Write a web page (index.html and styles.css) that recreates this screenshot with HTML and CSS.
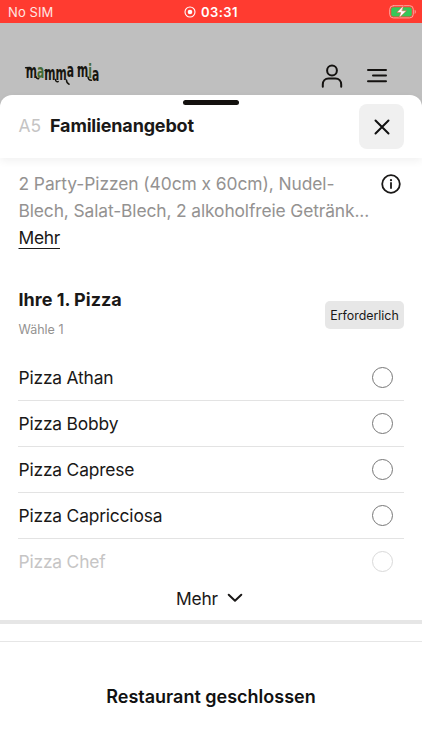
FILE: index.html
```html
<!DOCTYPE html>
<html lang="de">
<head>
<meta charset="utf-8">
<title>Familienangebot</title>
<link rel="stylesheet" href="styles.css">
</head>
<body>
<div class="screen">
  <div class="status">
    <span class="carrier">No SIM</span>
    <span class="clock">
      <svg width="12" height="12" viewBox="0 0 12 12"><circle cx="6" cy="6" r="5" fill="none" stroke="#fff" stroke-width="1.1"/><circle cx="6" cy="6" r="2.3" fill="#fff"/></svg>
      <span class="time">03:31</span>
    </span>
    <svg class="battery" width="28" height="14" viewBox="0 0 28 14">
      <rect x=".7" y=".7" width="23.6" height="12.2" rx="3.6" fill="none" stroke="#ffa69f" stroke-width="1"/>
      <rect x="2.2" y="2.2" width="20.6" height="9.2" rx="2" fill="#36c759"/>
      <path d="M25.7 4.7c1.5.7 1.5 3.5 0 4.2z" fill="#ffa69f"/>
      <path d="M14.5.6 7.8 7.6h4L10 13l7.5-7.2h-4.3z" fill="#fff" stroke="#ef4936" stroke-width=".5"/>
    </svg>
  </div>
  <header class="topbar">
    <svg class="logo" width="78" height="26" viewBox="0 0 78 26">
      <text class="logo-text" transform="scale(.75 1.18)" x="1" y="12.3">m<tspan class="green">a</tspan><tspan dy="2">m</tspan><tspan dy=".5">m</tspan><tspan dy="-3">a</tspan><tspan dx="4">m</tspan><tspan class="green" dy="1">i</tspan><tspan dy="2.200">a</tspan></text>
      <path class="logo-swash" d="M.6 4.800 5 4.600M20 7.500h3M53 4.800 57 4.600M11.3 14c.3 1.400 1.200 1.900 2.400 1.500M30.500 16.500c.2 2 1.200 2.600 2.700 2.100M41.500 17c0 2.200.7 3.400 2.600 4.200M63 14c.3 2.400 1.500 3.400 3.500 3.200"/>
    </svg>
    <svg class="user" width="22" height="24" viewBox="0 0 22 24"><circle cx="11" cy="6.5" r="4.9"/><path d="M1.8 22.8v-2.3c0-3.6 2.3-6 5.8-6h6.8c3.5 0 5.8 2.4 5.8 6v2.3"/></svg>
    <svg class="menu" width="22" height="16" viewBox="0 0 22 16"><path d="M2 2h18M7 7.6h13M2 13.2h18"/></svg>
  </header>
  <main class="sheet">
    <div class="sheet-head">
      <i class="handle"></i>
      <span class="code">A5</span>
      <h1>Familienangebot</h1>
      <button class="close" aria-label="Schließen"><svg width="16" height="16" viewBox="0 0 16 16"><path d="m1.5 1.5 13 13m0-13-13 13"/></svg></button>
    </div>
    <section class="about">
      <div class="about-text">
        <p class="line1">2 Party-Pizzen (40cm x 60cm), Nudel-</p>
        <p class="line2">Blech, Salat-Blech, 2 alkoholfreie Getränk...</p>
        <a class="more-link">Mehr</a>
      </div>
      <svg class="info" width="20" height="20" viewBox="0 0 20 20"><circle cx="10" cy="10" r="8.8"/><path d="M10 9v5"/><circle class="dot" cx="10" cy="6.2" r="1.1"/></svg>
    </section>
    <section class="group-head">
      <div>
        <h2>Ihre 1. Pizza</h2>
        <p class="hint">Wähle 1</p>
      </div>
      <span class="badge"><span>Erforderlich</span></span>
    </section>
    <ul class="options">
      <li><span>Pizza Athan</span><i class="radio"></i></li>
      <li><span>Pizza Bobby</span><i class="radio"></i></li>
      <li><span>Pizza Caprese</span><i class="radio"></i></li>
      <li><span>Pizza Capricciosa</span><i class="radio"></i></li>
      <li class="faded"><span>Pizza Chef</span><i class="radio"></i></li>
    </ul>
    <div class="expand"><span>Mehr</span><svg width="16" height="10" viewBox="0 0 16 10"><path d="m1.7 1.7 6.3 6 6.3-6"/></svg></div>
    <footer class="closed"><span>Restaurant geschlossen</span></footer>
  </main>
</div>
</body>
</html>
```
FILE: styles.css
```css
* { box-sizing: border-box; }
body { margin: 0; background: #bfbfbf; font-family: Inter, "Liberation Sans", sans-serif; color: #1a1817; }
h1, h2, p, ul { margin: 0; padding: 0; }
svg { display: block; flex: none; fill: none; stroke-linecap: round; stroke-linejoin: round; }
.screen { width: 422px; height: 750px; overflow: hidden; display: flex; flex-direction: column; }
.status { height: 23px; flex: none; background: #ff3b30; color: #fff; display: grid; grid-template-columns: 1fr auto 1fr; align-items: center; padding: 1px 8px 0 8px; }
.carrier { font-size: 13px; letter-spacing: .1px; color: #ffe5e2; }
.clock { display: flex; align-items: center; gap: 5px; font-size: 13px; font-weight: 600; }
.time { letter-spacing: .4px; }
.battery { justify-self: end; margin-right: -3px; }
.topbar { height: 72px; flex: none; display: flex; align-items: flex-start; padding: 41px 34px 0 25px; stroke: #141210; }
.logo { margin-right: auto; margin-top: -1px; overflow: visible; }
.logo-text { font: bold 16px "DejaVu Sans Condensed", "DejaVu Sans", sans-serif; font-stretch: condensed; fill: #17150f; stroke: none; }
.logo-text .green { fill: #456a35; }
.logo-swash { stroke: #17150f; stroke-width: 1.5; }
.user { stroke-width: 2; margin-right: 23px; }
.menu { stroke-width: 2; margin-top: 4px; }
.sheet { flex: 1; background: #fff; border-radius: 12px 12px 0 0; }
.sheet-head { position: relative; height: 63px; display: flex; align-items: center; padding: 0 18px; border-radius: 12px 12px 0 0; box-shadow: 0 3px 9px rgba(0, 0, 0, .06); }
.handle { position: absolute; left: 183px; top: 5px; width: 56px; height: 5px; border-radius: 3px; background: #14110f; }
.code { color: #c5c4c4; font-size: 17.4px; width: 32px; padding: 0 0 2px .5px; }
h1 { font-size: 18px; font-weight: 700; line-height: 22px; letter-spacing: -.17px; padding-bottom: 1px; }
.close { margin-left: auto; width: 45px; height: 45px; border: 0; padding: 0; border-radius: 8px; background: #f0f0f0; display: flex; align-items: center; justify-content: center; stroke: #111; stroke-width: 2; }
.about { display: flex; justify-content: space-between; padding: 12px 21px 0 18.5px; height: 128px; }
.about-text { font-size: 17.4px; line-height: 27px; color: #949291; white-space: nowrap; }
.line1 { letter-spacing: -.07px; }
.line2 { letter-spacing: -.12px; }
.more-link { color: #1a1817; letter-spacing: -.3px; text-decoration: underline; text-decoration-thickness: 1px; text-underline-offset: 4px; }
.info { margin-top: 4px; stroke: #1a1817; stroke-width: 1.8; }
.info .dot { fill: #1a1817; stroke: none; }
.group-head { height: 69px; display: flex; justify-content: space-between; padding: 0 18px 0 18.5px; }
h2 { font-size: 18px; line-height: 27px; font-weight: 700; letter-spacing: 0; }
.hint { font-size: 12.5px; line-height: 20px; margin-top: 7px; color: #949291; }
.badge { width: 79px; height: 28px; margin-top: 15px; border-radius: 5px; background: #e7e7e7; font-size: 12.4px; display: flex; align-items: center; justify-content: center; }
.options { list-style: none; padding: 0 18px; }
.options li { height: 46px; display: flex; align-items: center; justify-content: space-between; padding-right: 11px; border-bottom: 1px solid #e3e3e3; font-size: 17.4px; letter-spacing: -.18px; }
.options span { padding: 0 0 0 .5px; }
.radio { width: 21px; height: 21px; border: 1px solid #777; border-radius: 50%; }
.options .faded { border-bottom: 0; height: 45px; color: #c6c5c5; }
.faded .radio { border-color: #d9d9d9; }
.expand { height: 40px; padding: 0 3px 8px 0; display: flex; align-items: center; justify-content: center; gap: 10px; font-size: 17.4px; letter-spacing: -.2px; border-bottom: 4px solid #e6e6e6; stroke: #1a1817; stroke-width: 2; }
.expand svg { margin-left: -1px; }
.closed { margin-top: 17px; height: 110px; border-top: 1px solid #e6e6e6; display: flex; align-items: center; justify-content: center; font-size: 18px; font-weight: 600; color: #111; }
```
